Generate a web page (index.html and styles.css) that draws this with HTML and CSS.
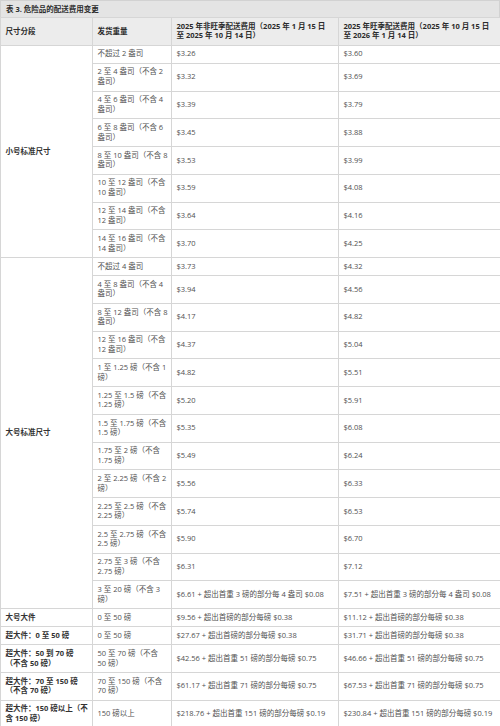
FILE: index.html
```html
<!DOCTYPE html>
<html lang="zh-CN">
<head>
<meta charset="utf-8">
<title>表 3. 危险品的配送费用变更</title>
<link rel="stylesheet" href="styles.css">
</head>
<body>
<div class="wrap">
  <div class="title">表 3. 危险品的配送费用变更</div>
  <table class="fees">
    <colgroup>
      <col class="c1"><col class="c2"><col class="c3"><col class="c4">
    </colgroup>
    <thead>
      <tr>
        <th>尺寸分段</th>
        <th>发货重量</th>
        <th>2025 年非旺季配送费用（2025 年 1 月 15 日<br>至 2025 年 10 月 14 日）</th>
        <th>2025 年旺季配送费用（2025 年 10 月 15 日<br>至 2026 年 1 月 14 日）</th>
      </tr>
    </thead>
    <tbody>
      <tr><td class="tier" rowspan="8">小号标准尺寸</td><td>不超过 2 盎司</td><td>$3.26</td><td>$3.60</td></tr>
      <tr><td>2 至 4 盎司（不含 2<br>盎司）</td><td>$3.32</td><td>$3.69</td></tr>
      <tr><td>4 至 6 盎司（不含 4<br>盎司）</td><td>$3.39</td><td>$3.79</td></tr>
      <tr><td>6 至 8 盎司（不含 6<br>盎司）</td><td>$3.45</td><td>$3.88</td></tr>
      <tr><td>8 至 10 盎司（不含 8<br>盎司）</td><td>$3.53</td><td>$3.99</td></tr>
      <tr><td>10 至 12 盎司（不含<br>10 盎司）</td><td>$3.59</td><td>$4.08</td></tr>
      <tr><td>12 至 14 盎司（不含<br>12 盎司）</td><td>$3.64</td><td>$4.16</td></tr>
      <tr><td>14 至 16 盎司（不含<br>14 盎司）</td><td>$3.70</td><td>$4.25</td></tr>

      <tr><td class="tier" rowspan="13">大号标准尺寸</td><td>不超过 4 盎司</td><td>$3.73</td><td>$4.32</td></tr>
      <tr><td>4 至 8 盎司（不含 4<br>盎司）</td><td>$3.94</td><td>$4.56</td></tr>
      <tr><td>8 至 12 盎司（不含 8<br>盎司）</td><td>$4.17</td><td>$4.82</td></tr>
      <tr><td>12 至 16 盎司（不含<br>12 盎司）</td><td>$4.37</td><td>$5.04</td></tr>
      <tr><td>1 至 1.25 磅（不含 1<br>磅）</td><td>$4.82</td><td>$5.51</td></tr>
      <tr><td>1.25 至 1.5 磅（不含<br>1.25 磅）</td><td>$5.20</td><td>$5.91</td></tr>
      <tr><td>1.5 至 1.75 磅（不含<br>1.5 磅）</td><td>$5.35</td><td>$6.08</td></tr>
      <tr><td>1.75 至 2 磅（不含<br>1.75 磅）</td><td>$5.49</td><td>$6.24</td></tr>
      <tr><td>2 至 2.25 磅（不含 2<br>磅）</td><td>$5.56</td><td>$6.33</td></tr>
      <tr><td>2.25 至 2.5 磅（不含<br>2.25 磅）</td><td>$5.74</td><td>$6.53</td></tr>
      <tr><td>2.5 至 2.75 磅（不含<br>2.5 磅）</td><td>$5.90</td><td>$6.70</td></tr>
      <tr><td>2.75 至 3 磅（不含<br>2.75 磅）</td><td>$6.31</td><td>$7.12</td></tr>
      <tr><td>3 至 20 磅（不含 3<br>磅）</td><td>$6.61 + 超出首重 3 磅的部分每 4 盎司 $0.08</td><td>$7.51 + 超出首重 3 磅的部分每 4 盎司 $0.08</td></tr>

      <tr><td class="tier">大号大件</td><td>0 至 50 磅</td><td>$9.56 + 超出首磅的部分每磅 $0.38</td><td>$11.12 + 超出首磅的部分每磅 $0.38</td></tr>
      <tr><td class="tier">超大件：0 至 50 磅</td><td>0 至 50 磅</td><td>$27.67 + 超出首磅的部分每磅 $0.38</td><td>$31.71 + 超出首磅的部分每磅 $0.38</td></tr>
      <tr><td class="tier">超大件：50 到 70 磅<br>（不含 50 磅）</td><td>50 至 70 磅（不含<br>50 磅）</td><td>$42.56 + 超出首重 51 磅的部分每磅 $0.75</td><td>$46.66 + 超出首重 51 磅的部分每磅 $0.75</td></tr>
      <tr><td class="tier">超大件：70 至 150 磅<br>（不含 70 磅）</td><td>70 至 150 磅（不含<br>70 磅）</td><td>$61.17 + 超出首重 71 磅的部分每磅 $0.75</td><td>$67.53 + 超出首重 71 磅的部分每磅 $0.75</td></tr>
      <tr><td class="tier">超大件：150 磅以上（不<br>含 150 磅）</td><td>150 磅以上</td><td>$218.76 + 超出首重 151 磅的部分每磅 $0.19</td><td>$230.84 + 超出首重 151 磅的部分每磅 $0.19</td></tr>
    </tbody>
  </table>
</div>
</body>
</html>
```

FILE: styles.css
```css
html, body {
  margin: 0;
  padding: 0;
  background: #ffffff;
}

.wrap {
  width: 500px;
  font-family: "Open Sans", "Noto Sans CJK SC", sans-serif;
  font-size: 7.5px;
  line-height: 9.7px;
  color: #505050;
}

.title {
  height: 17px;
  line-height: 17px;
  padding: 0 5px;
  box-sizing: border-box;
  background: #e4e4e4;
  border: 1px solid #d2d2d2;
  border-bottom: none;
  font-weight: 700;
  color: #2b2b2b;
}

.fees {
  width: 500px;
  table-layout: fixed;
  border-collapse: collapse;
}

.c1 { width: 92px; }
.c2 { width: 79px; }
.c3 { width: 167px; }
.c4 { width: 162px; }

.fees th,
.fees td {
  border: 1px solid #d6d6d6;
  padding: 3.68px 2px 3.68px 4.5px;
  text-align: left;
  vertical-align: middle;
  white-space: nowrap;
}

.fees th {
  background: #ececec;
  font-weight: 700;
  color: #2b2b2b;
}

.fees td.tier {
  font-weight: 700;
  color: #333333;
}
```
